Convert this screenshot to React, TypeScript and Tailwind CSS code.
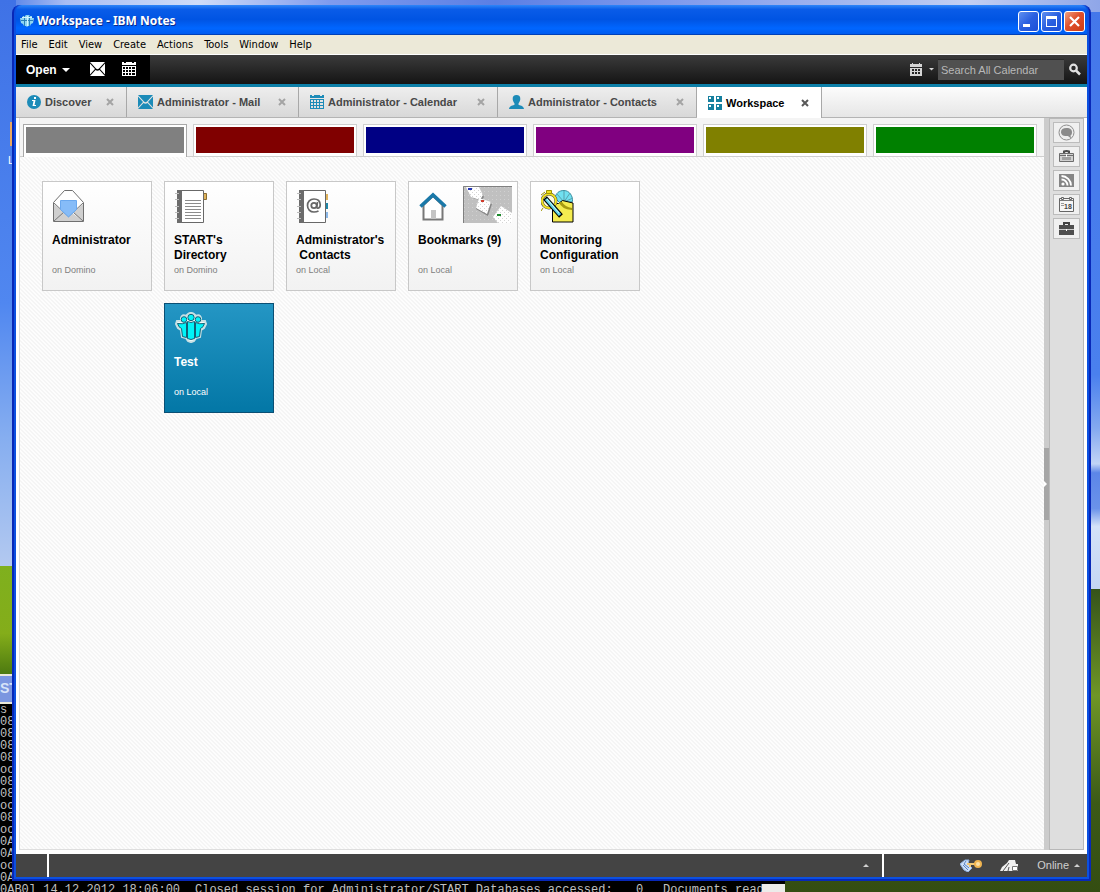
import React, { useState } from 'react';

interface TabItem {
  label: string;
  width: string;
  icon: React.ReactNode;
}

interface Tile {
  title: string;
  server: string;
  icon: React.ReactNode;
  extra?: React.ReactNode;
  selected?: boolean;
}

// ---------- Toolbar and tab icons ----------

const NotesIcon = () => (
  <svg width="14" height="14" viewBox="0 0 14 14">
    <path d="M3 2h2l1-1h3l1 1h2v2h2l-1 5-2 1-1 2H8l-1 1-1-1H4l-1-2-2-1-1-5h2z" fill="#8fd6f0" />
    <path d="M4.500 2v10M9.500 2v10M1 6.500h12" stroke="#2b80b8" fill="none" />
    <path d="M2 3.500h10M7.500 2v10" stroke="#d4f4ff" fill="none" />
  </svg>
);

const InfoIcon = () => (
  <svg width="14" height="14" viewBox="0 0 14 14">
    <circle cx="7" cy="7" r="7" fill="#1c8bb8" />
    <path d="M7 2h2v2H7zM5 5h3.500L7.500 10H9v1H5.500l1-5H5z" fill="#fff" />
  </svg>
);

const MailIcon = ({ color }: { color: string }) => (
  <svg width="15" height="14" viewBox="0 0 15 14">
    <path
      d="M0 0h15L9 6.500Q7.500 8 6 6.500zM0 1.500L5 7 0 12.500zM15 1.500L10 7l5 5.500zM0 14l5.500-6Q7.500 9.500 9.500 8L15 14z"
      fill={color}
    />
  </svg>
);

const CalendarIcon = ({ color }: { color: string }) => (
  <svg width="14" height="14" viewBox="0 0 14 14">
    <path
      fillRule="evenodd"
      fill={color}
      d="M0 0h2v1h2V0h6v1h2V0h2v3H0zM0 4h14v10H0zM1 5v2h2V5zM4 5v2h2V5zM7 5v2h2V5zM10 5v2h3V5zM1 8v2h2V8zM4 8v2h2V8zM7 8v2h2V8zM10 8v2h3V8zM1 11v2h2v-2zM4 11v2h2v-2zM7 11v2h2v-2zM10 11v2h3v-2z"
    />
  </svg>
);

const SearchScopeIcon = () => (
  <svg width="12" height="13" viewBox="0 0 12 13">
    <path
      fillRule="evenodd"
      fill="#d4d4d4"
      d="M0 1h2V0h1v1h6V0h1v1h2v3H0zM0 5h12v8H0zM2 6v2h2V6zM5 6v2h2V6zM8 6v2h2V6zM2 9v2h2V9zM5 9v2h2V9zM8 9v2h2V9z"
    />
  </svg>
);

const PersonIcon = () => (
  <svg width="15" height="14" viewBox="0 0 15 15" preserveAspectRatio="none">
    <path
      d="M7.500 0C10 0 11.500 1.500 11.300 4.500 11.200 6.500 10 8 9.500 9v1.500c1 .8 5 .8 5.500 4.500H0c.5-3.700 4.500-3.700 5.500-4.500V9C5 8 3.800 6.500 3.700 4.500 3.500 1.500 5 0 7.500 0z"
      fill="#1c8bb8"
    />
  </svg>
);

const WorkspaceIcon = () => (
  <svg width="14" height="14" viewBox="0 0 14 14">
    <path
      fillRule="evenodd"
      fill="#16809f"
      d="M0 0h6v6H0zM1 1v2h2V1zM8 0h6v6H8zM9 1v2h2V1zM0 8h6v6H0zM1 9v2h2V9zM8 8h6v6H8zM9 9v2h2V9z"
    />
  </svg>
);

const CloseMark = ({ color }: { color: string }) => (
  <svg width="8" height="8" viewBox="0 0 8 8">
    <path d="M1 1l6 6M7 1L1 7" stroke={color} strokeWidth="2" />
  </svg>
);

const Caret = ({ up = false, color = '#fff', width = 8 }: { up?: boolean; color?: string; width?: number }) => (
  <svg width={width} height={width / 2} viewBox="0 0 8 4">
    <path d={up ? 'M0 4l4-4 4 4z' : 'M0 0h8L4 4z'} fill={color} />
  </svg>
);

// ---------- Tile icons ----------

const EnvelopeIcon = () => (
  <svg width="31" height="33" viewBox="0 0 31 33">
    <path d="M.5 12.500L11.500.5h8l11 12v19H.5z" fill="#fff" stroke="#6f6f6f" />
    <path d="M1 14l11 9L1 31zM30 14l-11 9 11 8zM1 31l11-9 3.500 4 3.500-4 11 9z" fill="#cfcfcf" />
    <path d="M1 13l14.500 13.500L30 13M1 31l10-9M30 31l-10-9" stroke="#777" fill="none" />
    <path d="M7.500 10.500h16v9l-8 7.500-8-7.500z" fill="#86bcf8" stroke="#6aa8ee" />
  </svg>
);

const NotebookBase = () => (
  <>
    <path d="M3 .5h25.500v32H3z" fill="#fff" stroke="#686868" />
    <path d="M2 0h5v33H2z" fill="#6c6c6c" />
    <path d="M0 3.500h4M0 9.500h4M0 16.500h4M0 22.500h4M0 28.500h4" stroke="#bcbcbc" />
  </>
);

const DirectoryIcon = () => (
  <svg width="32" height="33" viewBox="0 0 32 33">
    <path d="M28.500 3.500h3v6h-3z" fill="#e0b35c" stroke="#8a6d30" />
    <NotebookBase />
    <path d="M10 10.500h16M10 13.500h16M10 16.500h16M10 19.500h16M10 22.500h16M10 25.500h16M10 28.500h16" stroke="#8c8c8c" />
  </svg>
);

const ContactsIcon = () => (
  <svg width="32" height="33" viewBox="0 0 32 33">
    <path d="M28 4h3v6h-3z" fill="#e0b35c" />
    <path d="M28 13h3v6h-3z" fill="#2087a8" />
    <path d="M28 22h3v6h-3z" fill="#8cb8e8" />
    <NotebookBase />
    <circle cx="17" cy="15.500" r="2.700" fill="none" stroke="#686868" strokeWidth="1.800" />
    <path
      d="M20.500 12l-.8 5c0 2 3.800 1.500 3.500-2.500C23 11 20.500 9 17 9c-4 0-6.500 3-6.500 6.500S13 22 17 22c2 0 3.500-.5 4.500-1"
      fill="none"
      stroke="#686868"
      strokeWidth="1.700"
    />
  </svg>
);

const HomeIcon = () => (
  <svg width="28" height="33" viewBox="0 -2 28 33">
    <path d="M4.500 13L14 4l9.500 9v14.500h-19z" fill="#fff" stroke="#787878" strokeWidth="2" />
    <path d="M12 18h5v9h-5z" fill="#c4c4c4" />
    <path d="M1.500 14.500L14 3l12.500 11.500" fill="none" stroke="#1a78a8" strokeWidth="3.500" />
  </svg>
);

const BoardPicture = () => (
  <svg width="49" height="37" viewBox="0 0 49 37">
    <defs>
      <pattern id="cork" width="4" height="4" patternUnits="userSpaceOnUse">
        <path d="M0 0h4v4H0z" fill="#c0c0c0" />
        <path d="M1 1h1v1H1z" fill="#d0d0d0" />
      </pattern>
      <pattern id="note" width="4" height="4" patternUnits="userSpaceOnUse">
        <path d="M0 0h4v4H0z" fill="#fff" />
        <path d="M1 2h1v1H1zM3 0h1v1H3z" fill="#d4d4d4" />
      </pattern>
    </defs>
    <path d="M0 0h49v37H0z" fill="url(#cork)" />
    <path d="M.5 37V.5H49" stroke="#808080" fill="none" />
    <path d="M5 2h11l5 9-3 4-8-3zM16 12l13 6-4 12-12-7z" fill="#858585" />
    <path d="M3 1h13l4 8-3 5-9-3zM16 12l12 4-4 12-11-6zM38 20l11 7v10H35l-5-6z" fill="url(#note)" />
    <path d="M5 2h4v2H5z" fill="#2638b8" />
    <path d="M18 14h3v2h-3z" fill="#d03c2c" />
    <path d="M34 28h4v2h-4z" fill="#1c8a2c" />
  </svg>
);

const MonitoringIcon = () => (
  <svg width="33" height="33" viewBox="0 0 33 33">
    <path d="M14 8C15 3 18 .5 23 .5c5 0 9 5 8.500 11L20 14z" fill="#70e0f0" stroke="#3b8ea0" />
    <path d="M23 12V1M23 12l6-9M23 12l-7-8M23 12l9-4" stroke="#5aa0ac" fill="none" />
    <path d="M11.500 13.500h6l4-3 10.500 2.500v19H11.500z" fill="#f4ec50" stroke="#000" />
    <path d="M18 12q2 7 13 8v-2q-7-1-10-6z" fill="#a59a10" />
    <circle cx="8" cy="11" r="7" fill="#fffde0" stroke="#444" strokeWidth="3" />
    <circle cx="8" cy="11" r="7" fill="none" stroke="#f0e020" strokeWidth="2" />
    <path d="M5.500.5h5v3h-5zM0 5l4-3M2 18l-2 3" stroke="#9d9200" fill="#f0e020" />
    <path d="M4 8l16 18" stroke="#000" strokeWidth="5" />
    <path d="M5 9l14 16" stroke="#5fd4e8" strokeWidth="3" />
    <path d="M6 9l12 14" stroke="#d4f8ff" />
  </svg>
);

const PeopleIcon = () => (
  <svg width="32" height="31" viewBox="0 0 32 31">
    <path
      d="M13 2q3-2 6 0l2 2q4-2 5 2v3h4l1 3-2 4-3 2-1 7-4 1-2 3q-3 2-6 0l-2-3-4-1-1-7-3-2-2-4 1-3h4V6q1-4 5-2z"
      fill="#eefafa"
      stroke="#c8e0e4"
      strokeWidth="2"
    />
    <g fill="#00f4f8" stroke="#106078">
      <path d="M2.500 11.500q5 1 9-1v15l-4-1-1-8q-3-1-4-5zM29.500 11.500q-5 1-9-1v15l4-1 1-8q3-1 4-5z" />
      <circle cx="9" cy="7.500" r="2.800" />
      <circle cx="23" cy="7.500" r="2.800" />
      <circle cx="16" cy="5.500" r="3.200" />
      <path d="M12.500 9.500q3.500 2 7 0v17q-3.500 2-7 0z" />
    </g>
  </svg>
);

// ---------- Sidebar icons ----------

const ChatIcon = () => (
  <svg width="17" height="17" viewBox="0 0 17 17">
    <circle cx="8.500" cy="8.500" r="7.500" fill="#ededed" stroke="#8e8e8e" />
    <path d="M8.500 4c4 0 5.500 2 5.500 4s-.5 3-1.500 3.500l.5 3-3-2.500C5 12.500 3 10.500 3 8s2-4 5.500-4z" fill="#8a8a8a" />
  </svg>
);

const CaseIcon = () => (
  <svg width="15" height="13" viewBox="0 0 15 13">
    <path d="M5 3V1.500q2.500-1 5 0V3" fill="none" stroke="#4c4c4c" strokeWidth="2" />
    <path d="M.5 3.500h14v8H.5z" fill="#d0d0d0" stroke="#6c6c6c" />
    <path d="M1 5.500h13" stroke="#6c6c6c" />
    <path d="M3 7h9v3H3z" fill="#a0a0a0" />
    <path d="M7 4h1v3H7z" fill="#fff" />
  </svg>
);

const FeedIcon = () => (
  <svg width="15" height="13" viewBox="0 0 15 13">
    <path d="M0 0h15v13H0z" fill="#858585" />
    <circle cx="4" cy="10" r="1.600" fill="#fff" />
    <path d="M2.500 5.500a6 6 0 0 1 6 6M2.500 2a9.500 9.500 0 0 1 9.500 9.500" fill="none" stroke="#fff" strokeWidth="1.800" />
  </svg>
);

const DayIcon = () => (
  <svg width="15" height="15" viewBox="0 0 15 15">
    <path d="M.5 1.500h14v13H.5z" fill="#f6f6f6" stroke="#666" />
    <path d="M1 3.500h13" stroke="#777" />
    <path d="M2.500.5h2v2h-2zM10.500.5h2v2h-2z" fill="#eee" stroke="#666" />
    <path d="M2 6.500h3M2 8.500h3" stroke="#999" />
    <text x="5" y="12" fontSize="7" fontWeight="bold" fontFamily="Liberation Sans, sans-serif" fill="#444">
      18
    </text>
  </svg>
);

const BriefcaseIcon = () => (
  <svg width="15" height="13" viewBox="0 0 15 13">
    <path d="M5 3V1h5v2" fill="none" stroke="#444" strokeWidth="2" />
    <path d="M0 3h15v10H0z" fill="#4e4e4e" />
    <path d="M0 7.500h15" stroke="#ccc" />
    <path d="M7 7h1v2H7z" fill="#fff" />
  </svg>
);

const TABS: TabItem[] = [
  { label: 'Discover', width: 'w-[111px]', icon: <InfoIcon /> },
  { label: 'Administrator - Mail', width: 'w-[172px]', icon: <MailIcon color="#1c8bb8" /> },
  { label: 'Administrator - Calendar', width: 'w-[199px]', icon: <CalendarIcon color="#1c8bb8" /> },
  { label: 'Administrator - Contacts', width: 'w-[199px]', icon: <PersonIcon /> },
  { label: 'Workspace', width: 'w-[125px]', icon: <WorkspaceIcon /> }
];

const PAGES = [
  { name: 'Gray page', color: 'bg-[#808080]' },
  { name: 'Red page', color: 'bg-[#800000]' },
  { name: 'Blue page', color: 'bg-[#000084]' },
  { name: 'Purple page', color: 'bg-[#800080]' },
  { name: 'Olive page', color: 'bg-[#808000]' },
  { name: 'Green page', color: 'bg-[#008000]' }
];

const TILES: Tile[] = [
  { title: 'Administrator', server: 'on Domino', icon: <EnvelopeIcon /> },
  { title: "START's\nDirectory", server: 'on Domino', icon: <DirectoryIcon /> },
  { title: "Administrator's\n Contacts", server: 'on Local', icon: <ContactsIcon /> },
  { title: 'Bookmarks (9)', server: 'on Local', icon: <HomeIcon />, extra: <BoardPicture /> },
  { title: 'Monitoring\nConfiguration', server: 'on Local', icon: <MonitoringIcon /> },
  { title: 'Test', server: 'on Local', icon: <PeopleIcon />, selected: true }
];

const PANELS = [
  { name: 'Sametime', icon: <ChatIcon /> },
  { name: 'Activities', icon: <CaseIcon /> },
  { name: 'Feeds', icon: <FeedIcon /> },
  { name: 'Day-At-A-Glance', icon: <DayIcon /> },
  { name: 'My Widgets', icon: <BriefcaseIcon /> }
];

const CONSOLE_LINES = ['s', '08', '08', '08', '08', 'oc', '08', '08', 'oc', '08', 'oc', '0A', '0A', 'oc', '0A'];

// Everything that peeks out from behind the Notes window
const Desktop = () => (
  <div className="absolute inset-0 overflow-hidden bg-[linear-gradient(180deg,#4477ea_0%,#4a80ee_42%,#84a9f0_48%,#c0d4f6_52%,#5c86e8_53%,#6a92ea_57%,#d4e2f8_59%,#c4d6f4_66%,#35531a_66%,#6f9626_78%,#3c5a17_90%,#344d12_100%)]">
    <div className="h-3 bg-[linear-gradient(90deg,#4a7ae6_0%,#a9bdf3_6%,#cfdcf8_18%,#7f9bee_30%,#5b7fe4_45%,#7d98ec_60%,#a6b9ef_78%,#c3cff2_88%,#8fa6e8_100%)]"></div>
    <div className="absolute left-0 top-0 w-4 h-[674px] bg-[linear-gradient(180deg,#3f72e6_0%,#5087f0_45%,#86aef0_65%,#b3c9f0_84%,#7fb01e_84%,#84ad1a_94%,#4d7a10_100%)]"></div>
    <div className="absolute left-[10px] top-[122px] w-2 h-6 bg-[#e8a860]"></div>
    <span className="absolute left-2 top-[152px] text-white text-[11px]">L</span>
    <div className="absolute left-0 top-[674px] w-[785px] h-[240px] bg-black text-[#c0c0c0] font-['Liberation_Mono',monospace] text-[12px] leading-[12px]">
      <div className="h-[30px] bg-[#7b96e0] border-y-2 border-[#ece9d8] text-[#d8e4f8] font-['Liberation_Sans',sans-serif] font-bold text-[14px] leading-[25px]">
        ST
      </div>
      {CONSOLE_LINES.map((line, i) => (
        <p key={i}>{line}</p>
      ))}
      <div className="flex whitespace-pre">
        <p className="w-[195px]">0AB0] 14.12.2012 18:06:00</p>
        <p className="w-[441px]">Closed session for Administrator/START Databases accessed:</p>
        <p className="w-[27px]">0</p>
        <p className="w-[99px]">Documents read</p>
        <div className="w-[23px] bg-[#ececea]"></div>
      </div>
    </div>
  </div>
);

const TitleBar = () => (
  <header className="h-[30px] flex items-center gap-[3px] pt-[3px] pl-[4px] pr-[2px] rounded-t-md border-b border-[#0040b8] bg-[linear-gradient(180deg,#2f86f8_0%,#0a5ce8_15%,#0054e3_50%,#0066ff_80%,#005cf0_100%)]">
    <NotesIcon />
    <h1 className="flex-1 text-white text-[12px] font-bold font-['Noto_Sans','Open_Sans',sans-serif] [text-shadow:1px_1px_0_#0a2a8c]">
      Workspace - IBM Notes
    </h1>
    <div className="flex gap-[2px]">
      <button aria-label="Minimize" className="w-[21px] h-[21px] rounded-[3px] border border-white bg-[linear-gradient(135deg,#5f8ff0,#2a5fe0_50%,#1b4fd8)] flex items-end justify-start p-1">
        <span className="block w-[7px] h-[3px] bg-white"></span>
      </button>
      <button aria-label="Maximize" className="w-[21px] h-[21px] rounded-[3px] border border-white bg-[linear-gradient(135deg,#5f8ff0,#2a5fe0_50%,#1b4fd8)] flex items-center justify-center">
        <span className="block w-[11px] h-[11px] border border-t-[3px] border-white"></span>
      </button>
      <button aria-label="Close" className="w-[21px] h-[21px] rounded-[3px] border border-white bg-[linear-gradient(135deg,#f0a080,#e0502c_45%,#cc3c14)] flex items-center justify-center">
        <svg width="11" height="11" viewBox="0 0 11 11">
          <path d="M1 1l9 9M10 1l-9 9" stroke="#fff" strokeWidth="2.200" />
        </svg>
      </button>
    </div>
  </header>
);

const MenuBar = () => (
  <nav className="h-5 flex items-center gap-[11px] pt-px pl-[5px] bg-[#ece9d8] border-b border-white text-black text-[11px] leading-[18px] font-['DejaVu_Sans_Condensed','Noto_Sans',sans-serif]">
    {['File', 'Edit', 'View', 'Create', 'Actions', 'Tools', 'Window', 'Help'].map((item) => (
      <button key={item}>{item}</button>
    ))}
  </nav>
);

const Toolbar = () => (
  <div className="h-8 flex border-b-[3px] border-[#0c7fa8] bg-[linear-gradient(180deg,#3b3b3b,#141414)]">
    <div className="w-[134px] bg-black flex items-center pl-[10px]">
      <button className="flex items-center gap-[5px] text-white font-bold text-[12px]">
        Open
        <Caret />
      </button>
      <button aria-label="Mail" className="ml-5 pb-px">
        <MailIcon color="#fff" />
      </button>
      <button aria-label="Calendar" className="ml-[17px] pb-px">
        <CalendarIcon color="#fff" />
      </button>
    </div>
    <form className="flex-1 flex items-center justify-end pr-[6px]" onSubmit={(e) => e.preventDefault()}>
      <button type="button" aria-label="Search scope" className="flex items-center gap-[7px] mr-1">
        <SearchScopeIcon />
        <Caret color="#d4d4d4" width={5} />
      </button>
      <input
        type="search"
        aria-label="Search All Calendar"
        placeholder="Search All Calendar"
        className="w-[126px] h-[21px] px-[3px] bg-[#505050] border-t border-[#2a2a2a] text-white text-[11px] placeholder:text-[#b8b8b8]"
      />
      <button aria-label="Search" className="ml-[5px]">
        <svg width="12" height="13" viewBox="0 0 12 13">
          <circle cx="4.500" cy="5" r="3.300" fill="none" stroke="#e0e0e0" strokeWidth="2.200" />
          <path d="M7 7.500l4 4" stroke="#e0e0e0" strokeWidth="2.500" />
        </svg>
      </button>
    </form>
  </div>
);

const App: React.FC = () => {
  const [activeTab, setActiveTab] = useState('Workspace');
  const [activePage, setActivePage] = useState(0);

  return (
    <div className="relative min-h-screen flex flex-col pt-[5px] pl-3 pr-[9px] pb-[11px] font-['Liberation_Sans',Arial,sans-serif]">
      <Desktop />

      <div className="relative flex-1 flex flex-col rounded-t-lg border-x-2 border-b-2 border-[#0828b8] bg-[#0c50e0] px-[2px] pb-[2px]">
        <TitleBar />
        <MenuBar />
        <Toolbar />

        <div className="h-[31px] flex bg-[linear-gradient(180deg,#fcfcfc,#e6e6e6)] border-b border-[#b4b4b4]">
          {TABS.map((tab) => {
            const active = tab.label === activeTab;
            return (
              <div
                key={tab.label}
                className={`${tab.width} shrink-0 flex items-center justify-between pl-[11px] pr-3 border-r border-[#a8a8a8] ${active ? 'bg-white -mb-px' : 'bg-[linear-gradient(180deg,#eeeeee,#d8d8d8)]'}`}
              >
                <button
                  onClick={() => setActiveTab(tab.label)}
                  className={`flex items-center gap-1 whitespace-nowrap text-[11px] leading-4 font-bold ${active ? 'h-[17px] text-black' : 'text-[#484848]'}`}
                >
                  {tab.icon}
                  {tab.label}
                </button>
                <button aria-label={`Close ${tab.label}`}>
                  <CloseMark color={active ? '#585858' : '#a4a4a4'} />
                </button>
              </div>
            );
          })}
        </div>

        <div className="flex-1 flex bg-white pl-[3px] pr-[3px] pb-1">
          <main className="flex-1 min-w-0 flex flex-col border-l border-b border-[#dedede] bg-[linear-gradient(45deg,#f5f5f5_25%,#fdfdfd_25%,#fdfdfd_50%,#f5f5f5_50%,#f5f5f5_75%,#fdfdfd_75%)] bg-[length:4px_4px]">
            <div className="h-[39px] flex items-end gap-[6px] pl-[3px] bg-[#f4f4f4] border-b border-[#cfcfcf]">
              {PAGES.map((page, i) => (
                <button
                  key={page.name}
                  aria-label={page.name}
                  onClick={() => setActivePage(i)}
                  className={`w-[164px] shrink-0 bg-white border border-b-0 px-[2px] pt-[2px] ${i === activePage ? 'h-[33px] -mb-px border-[#a8a8a8] pb-1' : 'h-8 border-[#cfcfcf] pb-[3px]'}`}
                >
                  <span className={`block h-full ${page.color}`}></span>
                </button>
              ))}
            </div>

            <div className="grid grid-cols-[repeat(5,110px)] gap-3 pt-6 pl-[22px]">
              {TILES.map((tile) => (
                <button
                  key={tile.title}
                  className={`h-[110px] flex flex-col text-left border ${
                    tile.selected
                      ? 'col-start-2 border-[#0a4f74] bg-[linear-gradient(180deg,#2496c4,#0377a6)] text-white'
                      : 'border-[#c8c8c8] bg-[linear-gradient(180deg,#ffffff,#f2f2f2)] text-black'
                  }`}
                >
                  <span className="w-full h-[51px] flex items-start justify-between pt-2 pl-[10px] pr-[5px]">
                    {tile.icon}
                    {tile.extra && <span className="-mt-1">{tile.extra}</span>}
                  </span>
                  <span className="h-[30px] pl-[9px] whitespace-pre text-[12px] leading-[15px] font-bold">
                    {tile.title}
                  </span>
                  <span className={`pl-[9px] text-[9px] leading-[15px] ${tile.selected ? 'text-white' : 'text-[#808080]'}`}>
                    {tile.server}
                  </span>
                </button>
              ))}
            </div>
          </main>

          <div className="w-[5px] flex items-center bg-[#cccccc]">
            <button aria-label="Toggle sidebar" className="w-full h-[72px] flex items-center bg-[#a6a6a6]">
              <svg width="3" height="6" viewBox="0 0 3 6">
                <path d="M0 0l3 3-3 3z" fill="#fff" />
              </svg>
            </button>
          </div>

          <aside className="w-[35px] flex flex-col items-center gap-[3px] pt-[3px] bg-[#dedede] border border-[#b8b8b8]">
            {PANELS.map((panel) => (
              <button
                key={panel.name}
                aria-label={panel.name}
                className="w-[27px] h-[21px] flex items-center justify-center bg-[#f0f0f0] border border-[#bcbcbc]"
              >
                {panel.icon}
              </button>
            ))}
          </aside>
        </div>

        <footer className="h-[23px] flex bg-[#444444] text-[#d0d0d0] text-[11px]">
          <div className="w-[33px] border-r-2 border-white"></div>
          <div className="flex-1 flex items-center justify-end pr-[13px] border-r-2 border-white">
            <button aria-label="Status history">
              <Caret up color="#d0d0d0" width={6} />
            </button>
          </div>
          <div className="w-[203px] flex items-center justify-end pr-[7px]">
            <button aria-label="Security" className="mr-[18px]">
              <svg width="22" height="13" viewBox="0 0 22 13">
                <path d="M0 5l5-4h4l-1 4 4 4-4 4-4-2z" fill="#cfe0f8" stroke="#8fb0e0" />
                <path d="M3 6l5 5M6 2L4 5l5 4" stroke="#5880c0" fill="none" />
                <path d="M7 5h9M10 5v3" stroke="#f0c878" strokeWidth="2" />
                <circle cx="18" cy="5" r="3" fill="#fae0a8" stroke="#f0b450" strokeWidth="2" />
              </svg>
            </button>
            <button aria-label="Location" className="mr-[18px]">
              <svg width="19" height="13" viewBox="0 0 19 13">
                <path d="M0 12L2 8l5-4 2-3h6l1 4h2v7z" fill="#f0f0f0" />
                <path d="M3 12L9 4M8 12l1-4" stroke="#555" />
                <path d="M12.500 7.500h5v4h-5z" fill="#fff" stroke="#777" />
              </svg>
            </button>
            <button className="flex items-center gap-[5px]">
              Online
              <Caret up color="#d0d0d0" width={6} />
            </button>
          </div>
        </footer>
      </div>
    </div>
  );
};

export default App;
